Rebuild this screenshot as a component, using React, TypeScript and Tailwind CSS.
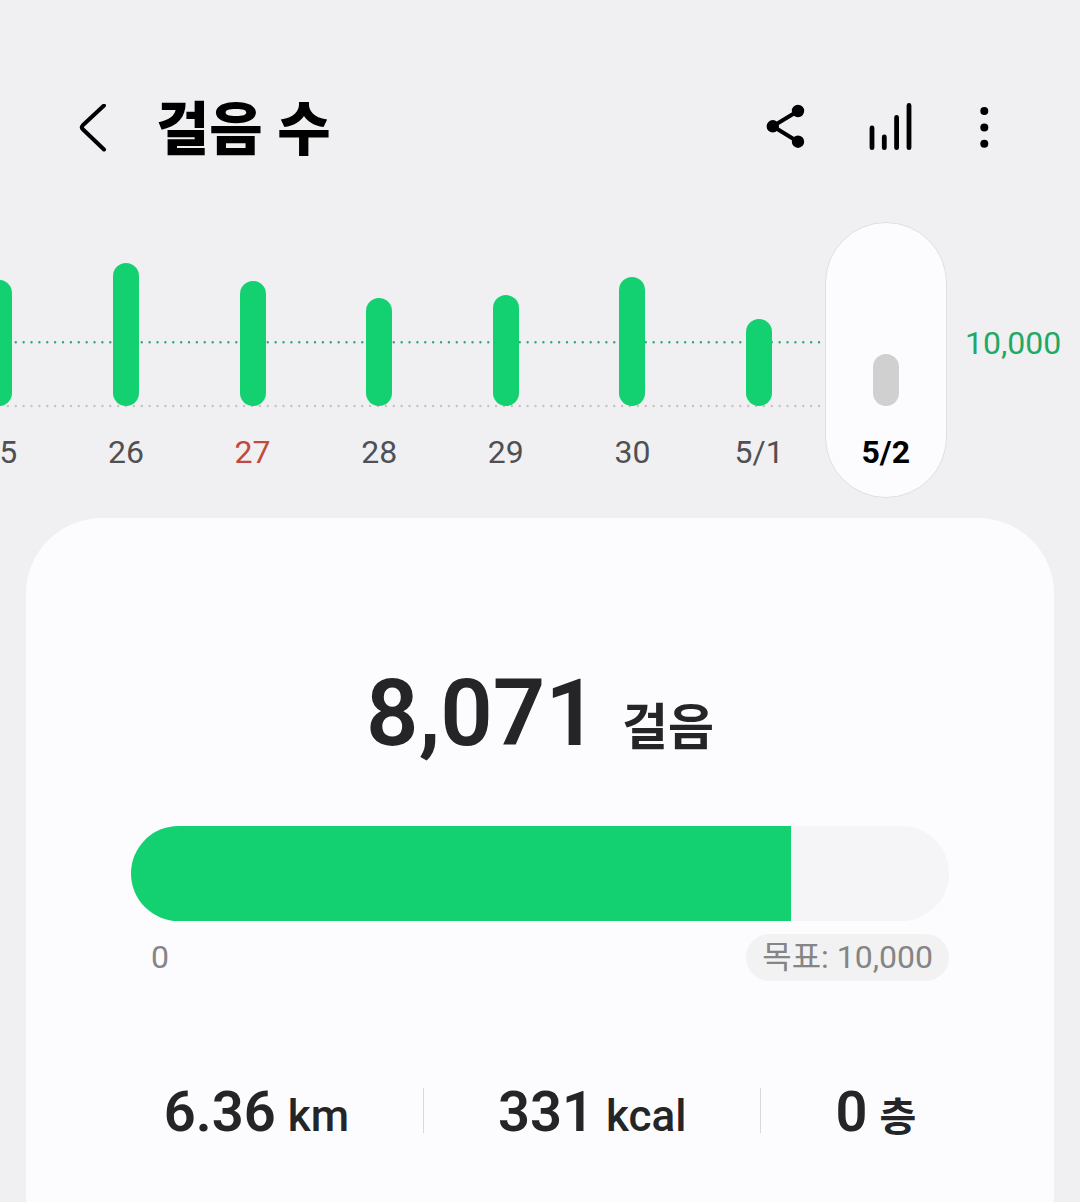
type Day = {
  label: string;
  height: number;
  tone?: "holiday" | "selected";
};

const DAYS: Day[] = [
  { label: "25", height: 126 },
  { label: "26", height: 143 },
  { label: "27", height: 125, tone: "holiday" },
  { label: "28", height: 108 },
  { label: "29", height: 111 },
  { label: "30", height: 129 },
  { label: "5/1", height: 87 },
  { label: "5/2", height: 52, tone: "selected" },
];

const STATS = [
  { value: "6.36", unit: "km", unitClass: "text-[44px] font-medium" },
  { value: "331", unit: "kcal", unitClass: "text-[44px] font-medium" },
  { value: "0", unit: "층", unitClass: "text-[40px] font-bold" },
];

const STEPS = 8071;
const GOAL = 10000;

function Header() {
  return (
    <header className="flex h-20 items-center justify-between pl-[68px] pr-[72px]">
      <div className="flex items-center gap-10">
        <button type="button" aria-label="뒤로" className="h-12 w-12">
          <svg viewBox="0 0 48 48" className="h-12 w-12" fill="none" stroke="#000" strokeWidth="4" strokeLinecap="round" strokeLinejoin="round">
            <path d="M36 1.5 14.8 21.3q-2 2 0 4L36 45.5" />
          </svg>
        </button>
        <h1 className="pt-1 text-[58px] font-extrabold leading-none text-black">걸음 수</h1>
      </div>
      <div className="flex items-center gap-12">
        <button type="button" aria-label="공유" className="h-12 w-12">
          <svg viewBox="0 0 48 48" className="h-12 w-12 overflow-visible" stroke="#000" strokeWidth="4">
            <path d="M30 7 4.8 22.3 30 37.7" fill="none" />
            <circle cx="30" cy="7" r="4.2" />
            <circle cx="4.8" cy="22.3" r="4.2" />
            <circle cx="30" cy="37.7" r="4.2" />
          </svg>
        </button>
        <button type="button" aria-label="통계" className="h-12 w-12">
          <svg viewBox="0 0 48 48" className="h-12 w-12 overflow-visible" stroke="#000" strokeWidth="4.8" strokeLinecap="round">
            <path d="M8 24v19.7M20.3 33v10.7M32.6 13.5v30.2M45 1.4v42.3" />
          </svg>
        </button>
        <button type="button" aria-label="더보기" className="h-12 w-12">
          <svg viewBox="0 0 48 48" className="h-12 w-12" fill="#000">
            <circle cx="24.3" cy="7" r="4" />
            <circle cx="24.3" cy="23.4" r="4" />
            <circle cx="24.3" cy="39.8" r="4" />
          </svg>
        </button>
      </div>
    </header>
  );
}

function DayColumn({ day }: { day: Day }) {
  const selected = day.tone === "selected";
  return (
    <button
      type="button"
      aria-pressed={selected}
      className={
        selected
          ? "mx-auto flex h-[276px] w-[122px] flex-col items-center rounded-full border border-[#dfdfe1] bg-[#fcfcfe]"
          : "flex h-[276px] flex-col items-center border border-transparent"
      }
    >
      <span className="flex h-[183px] shrink-0 items-end">
        <span
          className={selected ? "w-[26px] rounded-full bg-[#d0d0d0]" : "w-[26px] rounded-full bg-[#13d170]"}
          style={{ height: day.height }}
        />
      </span>
      <span
        className={
          selected
            ? "mt-7 text-[32px] font-bold leading-9 text-black"
            : day.tone === "holiday"
              ? "mt-7 text-[32px] leading-9 text-[#c24841]"
              : "mt-7 text-[32px] leading-9 text-[#505054]"
        }
      >
        {day.label}
      </span>
    </button>
  );
}

function WeekChart() {
  return (
    <section className="mt-[54px] flex overflow-hidden">
      {/* the oldest day is half scrolled out on the left */}
      <div className="relative -ml-16 flex-1">
        <svg className="absolute left-16 top-0 h-full w-full" fill="none" strokeWidth="2.4" strokeLinecap="round" strokeDasharray="0 7.875">
          <line x1="7.9" y1="120.3" x2="820" y2="120.3" stroke="#2fa86c" />
          <line x1="7.9" y1="184" x2="820" y2="184" stroke="#c3c3c6" />
        </svg>
        <div className="relative grid grid-cols-8">
          {DAYS.map((day) => (
            <DayColumn key={day.label} day={day} />
          ))}
        </div>
      </div>
      <div className="w-[131px] shrink-0 pl-4 pt-[103px] text-[32px] leading-9 text-[#1fa965]">
        {GOAL.toLocaleString("en-US")}
      </div>
    </section>
  );
}

function StepProgress() {
  return (
    <div className="mt-[42px] px-[105px]">
      <div className="h-[95px] overflow-hidden rounded-full bg-[#f5f5f7]">
        <div className="h-full bg-[#13d170]" style={{ width: `${(STEPS / GOAL) * 100}%` }} />
      </div>
      <div className="mt-[13px] flex items-center justify-between text-[32px] leading-[47px] text-[#858587]">
        <span className="pl-5">0</span>
        <span className="rounded-full bg-[#f2f2f2] px-4">목표: {GOAL.toLocaleString("en-US")}</span>
      </div>
    </div>
  );
}

export default function App() {
  return (
    <main className="flex min-h-screen flex-col overflow-hidden bg-[#f0f0f2] pt-[88px] font-[Roboto,'Noto_Sans_CJK_KR',sans-serif]">
      <Header />
      <WeekChart />
      <section className="mx-[26px] mt-5 flex-1 rounded-t-[76px] bg-[#fcfcfe] pb-10 pt-[140px] text-[#252528]">
        <p className="flex items-baseline justify-center gap-6 leading-[112px]">
          <span className="text-[92px] font-semibold">{STEPS.toLocaleString("en-US")}</span>
          <span className="text-[50px] font-bold">걸음</span>
        </p>
        <StepProgress />
        <ul className="mt-[107px] flex justify-center divide-x divide-[#d9d9dc]">
          {STATS.map((stat) => (
            <li key={stat.unit} className="flex h-[45px] items-baseline gap-3 px-[74px] leading-[49px]">
              <span className="text-[56px] font-semibold">{stat.value}</span>
              <span className={stat.unitClass}>{stat.unit}</span>
            </li>
          ))}
        </ul>
      </section>
    </main>
  );
}
